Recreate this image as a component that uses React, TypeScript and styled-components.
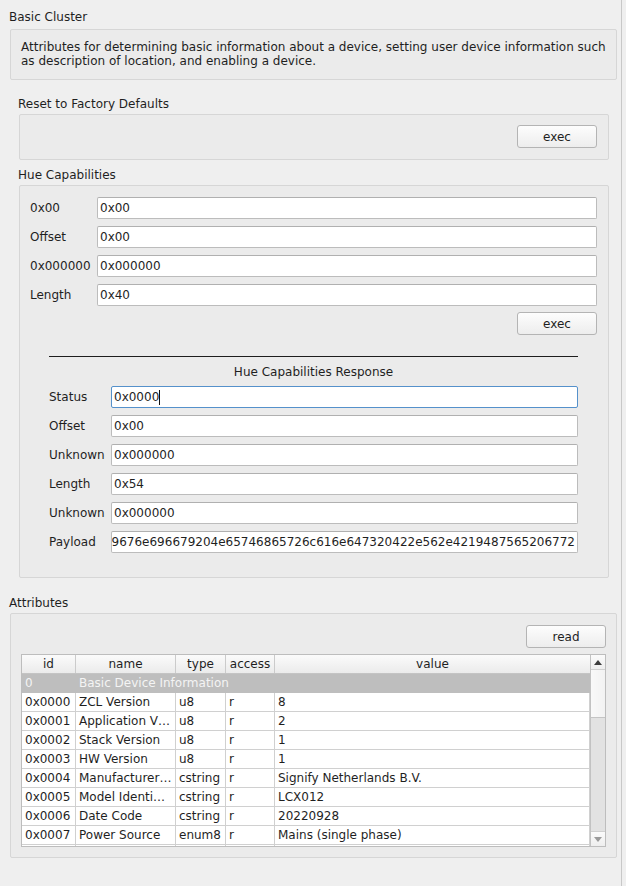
import React from "react";
import styled, { createGlobalStyle } from "styled-components";

const GlobalStyle = createGlobalStyle`
  html, body { margin: 0; padding: 0; background: #efefef; }
  body {
    font-family: "DejaVu Sans", "Noto Sans", sans-serif;
    font-size: 12px;
    color: #1f1f1f;
  }
  * { box-sizing: border-box; }
`;

const Window = styled.div`
  width: 626px;
  height: 886px;
  overflow: hidden;
  background: #efefef;
  display: flex;
`;

const Scroller = styled.div`
  width: 622px;
  height: 886px;
  border-right: 1px solid #c8c8c8;
  display: flex;
  flex-direction: column;
  padding-top: 10px;
`;

const Caption = styled.div<{ $indent: number; $gap: number }>`
  margin: ${(p) => p.$gap}px 0 0 ${(p) => p.$indent}px;
  height: 14px;
  line-height: 14px;
  white-space: nowrap;
`;

const Panel = styled.div<{ $left: number; $width: number; $height: number; $gap: number }>`
  margin: ${(p) => p.$gap}px 0 0 ${(p) => p.$left}px;
  width: ${(p) => p.$width}px;
  height: ${(p) => p.$height}px;
  background: #ebebeb;
  border: 1px solid #d6d6d6;
  border-radius: 2px;
  display: flex;
  flex-direction: column;
`;

const DescText = styled.div`
  padding: 10px 0 0 10px;
  line-height: 14px;
  white-space: nowrap;
`;

const ButtonBar = styled.div<{ $pad: string }>`
  display: flex;
  justify-content: flex-end;
  padding: ${(p) => p.$pad};
`;

const Button = styled.div`
  width: 80px;
  height: 23px;
  border: 1px solid #b4b4b4;
  border-radius: 3px;
  background: linear-gradient(#fdfdfd, #ededed);
  display: flex;
  align-items: center;
  justify-content: center;
  color: #1f1f1f;
`;

const FormArea = styled.div<{ $right: number }>`
  padding: 11px ${(p) => p.$right}px 0 10px;
  display: flex;
  flex-direction: column;
`;

const Rows = styled.div`
  display: flex;
  flex-direction: column;
  gap: 7px;
`;

const FormRow = styled.div<{ $label: number }>`
  display: grid;
  grid-template-columns: ${(p) => p.$label}px 1fr;
  align-items: center;
  height: 22px;
`;

const Label = styled.span`
  white-space: nowrap;
  line-height: 14px;
`;

const Field = styled.div<{ $focus?: boolean; $scrolled?: boolean }>`
  height: 22px;
  background: #fff;
  border: 1px solid ${(p) => (p.$focus ? "#5591cb" : "#bcbcbc")};
  border-top-color: ${(p) => (p.$focus ? "#5591cb" : "#b0b0b0")};
  border-radius: 2px;
  padding: ${(p) => (p.$scrolled ? "0 2px 0 0" : "0 0 0 2px")};
  display: flex;
  align-items: center;
  justify-content: ${(p) => (p.$scrolled ? "flex-end" : "flex-start")};
  overflow: hidden;
  white-space: nowrap;
  line-height: 14px;
`;

const FieldText = styled.span`
  flex-shrink: 0;
`;

const Caret = styled.span`
  display: inline-block;
  width: 1px;
  height: 15px;
  background: #111;
`;

const Response = styled.div`
  margin: 21px 19px 0 19px;
  display: flex;
  flex-direction: column;
`;

const Rule = styled.div`
  height: 1px;
  background: #1e1e1e;
`;

const ResponseTitle = styled.div`
  margin: 8px 0 7px 0;
  height: 14px;
  line-height: 14px;
  text-align: center;
`;

/* ---------- table ---------- */

const TableFrame = styled.div`
  margin-top: 6px;
  height: 193px;
  border: 1px solid #bdbdbd;
  display: flex;
  background: #fff;
`;

const Viewport = styled.div`
  flex: 1;
  overflow: hidden;
  display: flex;
  flex-direction: column;
`;

const COLS = "54px 100px 50px 49px 1fr";

const HeaderRow = styled.div`
  display: grid;
  grid-template-columns: ${COLS};
  height: 19px;
  flex-shrink: 0;
  background: linear-gradient(#fbfbfb, #ebebeb);
  border-bottom: 1px solid #c4c4c4;
`;

const HeaderCell = styled.div`
  border-right: 1px solid #cbcbcb;
  display: flex;
  align-items: center;
  justify-content: center;
  line-height: 14px;
  &:last-child { border-right: none; }
`;

const BodyRow = styled.div<{ $group?: boolean }>`
  display: grid;
  grid-template-columns: ${COLS};
  height: 19px;
  flex-shrink: 0;
  background: ${(p) => (p.$group ? "#bebebe" : "#fff")};
  color: ${(p) => (p.$group ? "#f4f4f4" : "#1f1f1f")};
  border-bottom: 1px solid ${(p) => (p.$group ? "#bebebe" : "#d0d0d0")};
`;

const Cell = styled.div<{ $group?: boolean }>`
  border-right: 1px solid ${(p) => (p.$group ? "transparent" : "#d0d0d0")};
  padding-left: 3px;
  display: flex;
  align-items: center;
  white-space: nowrap;
  overflow: hidden;
  line-height: 14px;
`;

const GroupCell = styled.div`
  grid-column: 2 / -1;
  padding-left: 3px;
  display: flex;
  align-items: center;
  white-space: nowrap;
  line-height: 14px;
`;

const ScrollBar = styled.div`
  width: 15px;
  border-left: 1px solid #c2c2c2;
  background: #e2e2e2;
  display: flex;
  flex-direction: column;
`;

const ScrollArrow = styled.div`
  height: 15px;
  background: linear-gradient(#fbfbfb, #eeeeee);
  border-bottom: 1px solid #d0d0d0;
  display: flex;
  align-items: center;
  justify-content: center;
  &:last-child { border-bottom: none; border-top: 1px solid #d0d0d0; }
`;

const ScrollHandle = styled.div`
  height: 48px;
  background: linear-gradient(90deg, #f9f9f9, #f2f2f2);
  border-bottom: 1px solid #c4c4c4;
`;

const ScrollTrack = styled.div`
  flex: 1;
`;

const Arrow = ({ up, color }: { up?: boolean; color: string }) => (
  <svg width="8" height="5" viewBox="0 0 8 5">
    {up ? <path d="M0 5 L4 0 L8 5 Z" fill={color} /> : <path d="M0 0 L8 0 L4 5 Z" fill={color} />}
  </svg>
);

const rows: [string, string, string, string, string][] = [
  ["0x0000", "ZCL Version", "u8", "r", "8"],
  ["0x0001", "Application V…", "u8", "r", "2"],
  ["0x0002", "Stack Version", "u8", "r", "1"],
  ["0x0003", "HW Version", "u8", "r", "1"],
  ["0x0004", "Manufacturer…", "cstring", "r", "Signify Netherlands B.V."],
  ["0x0005", "Model Identi…", "cstring", "r", "LCX012"],
  ["0x0006", "Date Code", "cstring", "r", "20220928"],
  ["0x0007", "Power Source", "enum8", "r", "Mains (single phase)"],
  ["", "", "", "", ""],
];

const requestFields: [string, string][] = [
  ["0x00", "0x00"],
  ["Offset", "0x00"],
  ["0x000000", "0x000000"],
  ["Length", "0x40"],
];

const responseFields: [string, string][] = [
  ["Offset", "0x00"],
  ["Unknown", "0x000000"],
  ["Length", "0x54"],
  ["Unknown", "0x000000"],
];

export default function App() {
  return (
    <Window>
      <GlobalStyle />
      <Scroller>
        <Caption $indent={9} $gap={0}>Basic Cluster</Caption>
        <Panel $left={10} $width={607} $height={51} $gap={5}>
          <DescText>
            <div>Attributes for determining basic information about a device, setting user device information such</div>
            <div>as description of location, and enabling a device.</div>
          </DescText>
        </Panel>

        <Caption $indent={18} $gap={17}>Reset to Factory Defaults</Caption>
        <Panel $left={19} $width={590} $height={46} $gap={3}>
          <ButtonBar $pad="10px 11px 0 0">
            <Button>exec</Button>
          </ButtonBar>
        </Panel>

        <Caption $indent={18} $gap={8}>Hue Capabilities</Caption>
        <Panel $left={19} $width={590} $height={393} $gap={3}>
          <FormArea $right={11}>
            <Rows>
              {requestFields.map(([l, v], i) => (
                <FormRow key={i} $label={67}>
                  <Label>{l}</Label>
                  <Field><FieldText>{v}</FieldText></Field>
                </FormRow>
              ))}
            </Rows>
            <ButtonBar $pad="6px 0 0 0">
              <Button>exec</Button>
            </ButtonBar>
            <Response>
              <Rule />
              <ResponseTitle>Hue Capabilities Response</ResponseTitle>
              <Rows>
                <FormRow $label={62}>
                  <Label>Status</Label>
                  <Field $focus>
                    <FieldText>0x0000</FieldText>
                    <Caret />
                  </Field>
                </FormRow>
                {responseFields.map(([l, v], i) => (
                  <FormRow key={i} $label={62}>
                    <Label>{l}</Label>
                    <Field><FieldText>{v}</FieldText></Field>
                  </FormRow>
                ))}
                <FormRow $label={62}>
                  <Label>Payload</Label>
                  <Field $scrolled>
                    <FieldText>9676e696679204e65746865726c616e647320422e562e4219487565206772</FieldText>
                  </Field>
                </FormRow>
              </Rows>
            </Response>
          </FormArea>
        </Panel>

        <Caption $indent={9} $gap={18}>Attributes</Caption>
        <Panel $left={10} $width={607} $height={245} $gap={3}>
          <FormArea $right={10}>
            <ButtonBar $pad="0">
              <Button>read</Button>
            </ButtonBar>
            <TableFrame>
              <Viewport>
                <HeaderRow>
                  <HeaderCell>id</HeaderCell>
                  <HeaderCell>name</HeaderCell>
                  <HeaderCell>type</HeaderCell>
                  <HeaderCell>access</HeaderCell>
                  <HeaderCell>value</HeaderCell>
                </HeaderRow>
                <BodyRow $group>
                  <Cell $group>0</Cell>
                  <GroupCell>Basic Device Information</GroupCell>
                </BodyRow>
                {rows.map((r, i) => (
                  <BodyRow key={i}>
                    {r.map((c, j) => (
                      <Cell key={j}>{c}</Cell>
                    ))}
                  </BodyRow>
                ))}
              </Viewport>
              <ScrollBar>
                <ScrollArrow><Arrow up color="#3c3c3c" /></ScrollArrow>
                <ScrollHandle />
                <ScrollTrack />
                <ScrollArrow><Arrow color="#9a9a9a" /></ScrollArrow>
              </ScrollBar>
            </TableFrame>
          </FormArea>
        </Panel>
      </Scroller>
    </Window>
  );
}
